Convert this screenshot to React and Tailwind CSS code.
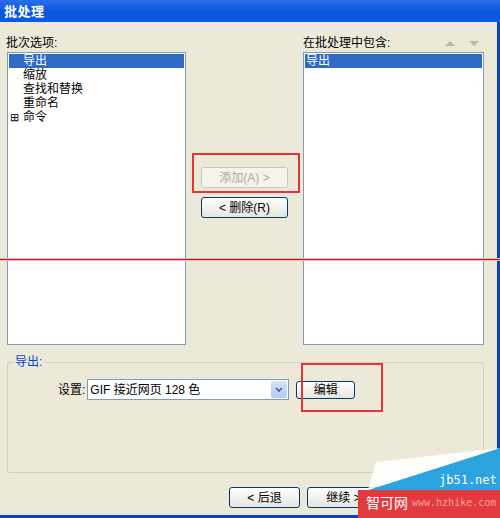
import React from 'react'

const FONT = { fontFamily: '"Liberation Sans", "Noto Sans CJK SC", sans-serif' };

const leftItems = [
  { label: '导出', selected: true },
  { label: '缩放' },
  { label: '查找和替换' },
  { label: '重命名' },
  { label: '命令', expand: true },
];

function XpButton({ children, disabled, className = '' }) {
  return (
    <div
      className={`flex items-center justify-center rounded-[3px] border text-[12px] leading-none ${
        disabled
          ? 'border-[#C9C7BA] bg-[#F5F4EA] text-[#ACA899]'
          : 'border-[#003C74] bg-gradient-to-b from-white to-[#E6E5DE] text-black'
      } ${className}`}
    >
      {children}
    </div>
  );
}

export default function App() {
  return (
    <div className="relative w-[500px] h-[518px] overflow-hidden bg-[#ECE9D8] text-[12px] text-black" style={FONT}>
      {/* title bar */}
      <div className="h-[22px] flex items-center pl-[4px] bg-gradient-to-b from-[#2A6FE8] via-[#0656E0] to-[#0A5CE4]">
        <span className="text-white font-bold text-[13px] leading-none tracking-[0.5px]">批处理</span>
      </div>

      <div className="h-[496px] border-r-[3px] border-b-[3px] border-[#0A3FC8] flex flex-col">
        {/* lists */}
        <div className="flex">
          <div className="ml-[6px] w-[180px] flex flex-col">
            <div className="mt-[12px] h-[18px] leading-[18px]">批次选项:</div>
            <div className="ml-[1px] w-[179px] h-[293px] border border-[#7F9DB9] bg-white pt-[1px] px-[1px]">
              {leftItems.map((it) => (
                <div
                  key={it.label}
                  className={`h-[14px] flex items-center ${it.selected ? 'bg-[#316AC5] text-white' : ''}`}
                >
                  <span className="w-[14px] pl-[1px] text-[11px] leading-none">{it.expand ? '⊞' : ''}</span>
                  <span className="text-[12px] leading-none">{it.label}</span>
                </div>
              ))}
            </div>
          </div>

          <div className="w-[117px] flex flex-col pl-[15px] pt-[145px] gap-[9px]">
            <XpButton disabled className="w-[87px] h-[21px]">添加(A) &gt;</XpButton>
            <XpButton className="w-[87px] h-[21px]">&lt; 删除(R)</XpButton>
          </div>

          <div className="w-[181px] flex flex-col">
            <div className="mt-[12px] h-[18px] leading-[18px] flex items-center">
              <span className="flex-1">在批处理中包含:</span>
              <span className="w-0 h-0 border-x-[5px] border-x-transparent border-b-[5px] border-b-[#BDB9A8] mr-[14px]" />
              <span className="w-0 h-0 border-x-[5px] border-x-transparent border-t-[5px] border-t-[#BDB9A8] mr-[5px]" />
            </div>
            <div className="w-[181px] h-[293px] border border-[#7F9DB9] bg-white pt-[1px] px-[1px]">
              <div className="h-[14px] flex items-center bg-[#316AC5] text-white pl-[1px]">
                <span className="leading-none">导出</span>
              </div>
            </div>
          </div>
        </div>

        {/* group box */}
        <fieldset className="ml-[7px] mt-[10px] w-[477px] h-[118px] border border-[#D0D0BF] rounded-[3px] px-0">
          <legend className="ml-[5px] px-[2px] text-[#0046D5] leading-[14px]">导出:</legend>
          <div className="flex items-center mt-[10px] ml-[50px]">
            <span className="mr-[2px]">设置:</span>
            <div className="w-[202px] h-[21px] border border-[#7F9DB9] bg-white flex items-center">
              <span className="flex-1 pl-[2px]">GIF 接近网页 128 色</span>
              <div className="w-[16px] h-[17px] mr-[1px] rounded-[2px] bg-gradient-to-b from-[#D6E3FD] to-[#B4C8F6] flex items-center justify-center">
                <svg width="8" height="6" viewBox="0 0 8 6">
                  <path d="M1 1 L4 4 L7 1" fill="none" stroke="#4D6185" strokeWidth="1.6" />
                </svg>
              </div>
            </div>
            <XpButton className="ml-[7px] w-[59px] h-[18px]">编辑</XpButton>
          </div>
        </fieldset>

        {/* bottom buttons */}
        <div className="flex ml-[229px] mt-[14px] gap-[7px]">
          <XpButton className="w-[71px] h-[21px]">&lt; 后退</XpButton>
          <XpButton className="w-[73px] h-[21px]">继续 &gt;</XpButton>
        </div>
      </div>

      {/* annotations */}
      <div className="absolute left-0 top-[258px] w-[500px] h-[3px] bg-[#F4B8B8]" />
      <div className="absolute left-0 top-[259px] w-[500px] h-[1px] bg-[#C8161D]" />
      <div className="absolute left-[192px] top-[153px] w-[108px] h-[40px] border-2 border-[#E53538]" />
      <div className="absolute left-[301px] top-[363px] w-[82px] h-[49px] border-2 border-[#E53538]" />

      {/* watermark */}
      <svg className="absolute left-[358px] top-[448px]" width="142" height="70" viewBox="0 0 142 70">
        <polygon points="142,0 142,42 10,42" fill="#2BA3DE" />
        <polygon points="142,0 10,42 18,14" fill="#FFFFFF" opacity="0.9" />
        <rect x="0" y="42" width="142" height="28" fill="#E23A3E" />
      </svg>
      <div className="absolute left-[439px] top-[474px] text-[12px] leading-none text-white" style={{ fontFamily: '"DejaVu Sans Mono", monospace' }}>jb51.net</div>
      <div className="absolute left-[366px] top-[496px] text-[14px] leading-none text-white">智可网</div>
      <div className="absolute left-[412px] top-[498px] text-[10px] leading-none text-[#F5A0A0]" style={{ fontFamily: '"DejaVu Sans Mono", monospace' }}>www.hzhike.com</div>
    </div>
  );
}
